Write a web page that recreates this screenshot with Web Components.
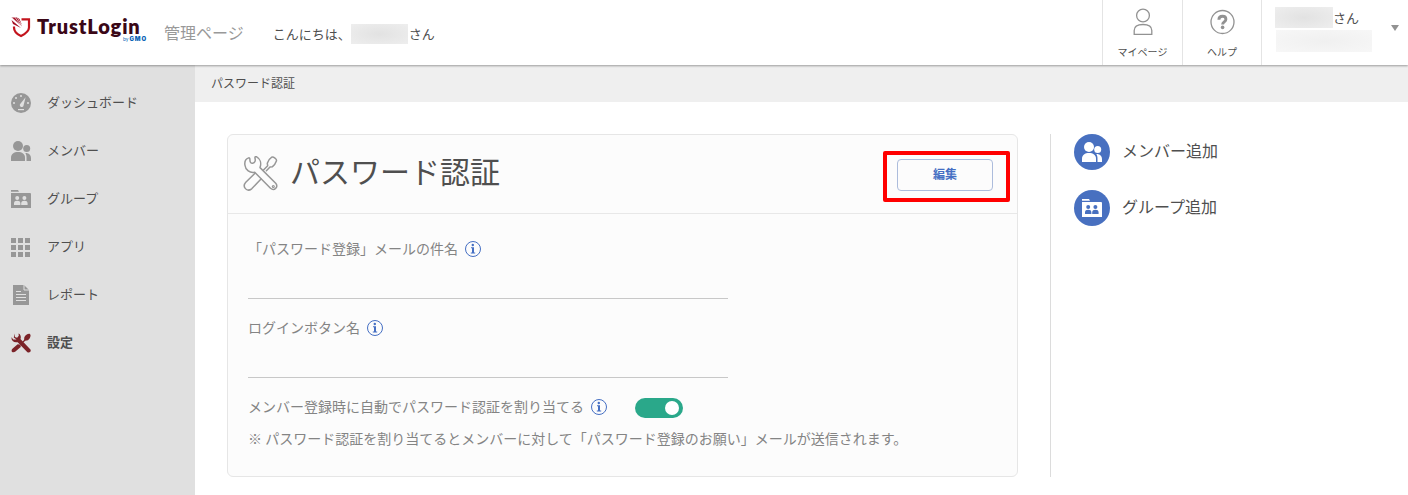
<!DOCTYPE html>
<html lang="ja">
<head>
<meta charset="utf-8">
<title>TrustLogin 管理ページ</title>
<style>
  body {
    margin: 0;
    height: 495px;
    overflow: hidden;
    background: #fff;
    color: #4f4f4f;
    font-family: "Noto Sans CJK JP", sans-serif;
    font-size: 13px;
  }
</style>
</head>
<body>
<trust-app></trust-app>

<script>
function makeTemplate(html) {
  const template = document.createElement("template");
  template.innerHTML = html;
  return template;
}

// base for every element: clones its template into the shadow root
class BaseElement extends HTMLElement {
  constructor() {
    super();
    this.attachShadow({ mode: "open" });
    this.shadowRoot.appendChild(this.constructor.template.content.cloneNode(true));
  }
}

// ICONS
const ICONS = {
  gauge: `<svg viewBox="0 0 20 20"><circle cx="10" cy="10" r="10" fill="currentColor"/>
    <g class="cut"><circle cx="3" cy="10" r="1"/><circle cx="5" cy="5" r="1"/><circle cx="10" cy="3" r="1"/><circle cx="17" cy="10" r="1"/>
    <path d="M14.6 4.2 12.6 12.2A1.9 1.9 0 1 1 9.4 10.8Z"/><rect x="7" y="16" width="6" height="1.2"/></g></svg>`,
  members: `<svg viewBox="0 0 20 20" fill="currentColor"><circle cx="7" cy="5" r="5"/>
    <path d="M0 20v-3.500C0 13 3 11 7 11s7 2 7 5.500V20z"/>
    <circle cx="15.700" cy="7.500" r="3.500"/>
    <path d="M14.300 12c3.500-.2 5.700 2 5.700 5.200V20h-4.500v-3.500c0-1.800-.4-3.200-1.200-4.500z"/></svg>`,
  folder: `<svg viewBox="0 0 20 20"><path fill="currentColor" d="M0 1h7l1 1.700H0zM0 4h19q1 0 1 1v14H0z"/>
    <g class="cut"><circle cx="6.200" cy="9" r="2"/><circle cx="13.400" cy="9" r="2"/>
    <path d="M3 16v-1.800c0-1.700 1.200-2.500 3.200-2.500s3.200.8 3.200 2.500V16zM10.200 16v-1.800c0-1.700 1.200-2.500 3.200-2.500s3.200.8 3.200 2.500V16z"/></g></svg>`,
  apps: `<svg viewBox="0 0 20 20" fill="currentColor"><path d="M0 1h5v5H0zM7 1h5v5H7zM14 1h5v5h-5zM0 8h5v5H0zM7 8h5v5H7zM14 8h5v5h-5zM0 15h5v5H0zM7 15h5v5H7zM14 15h5v5h-5z"/></svg>`,
  report: `<svg viewBox="0 0 20 20"><path fill="currentColor" d="M2 0h11l5 5v15H2z"/>
    <g fill="none" class="cutline"><path d="M13 0v5h5M5 6.500h5M5 9.500h10M5 12.500h10M5 15.500h10"/></g></svg>`,
  tools: `<svg viewBox="0 0 36 36">
    <path fill="currentColor" d="M33.500 1.500C30 1 26 3.500 24 7.500l-.5 5-9 9 1-1-3.500-.2L3 28c-5 5 .7 9 5 5.500L17.500 25v-3l8-8 5-1c3-2 5.500-7 4.500-10z"/>
    <path class="cutline" stroke-width="7" fill="none" d="m13 13 20 20"/>
    <path fill="currentColor" d="M6.500 1 7 7l4 1.500L14 5l-.5-4c4 1.500 5 6 3.500 10l18 18.500c2 4-2 7-5.500 5L12 16.500C5 18 0 14 1 7.500l3 4h6L5 8z"/></svg>`,
  toolsOutline: `<svg viewBox="0 0 36 36" fill="none" stroke="currentColor" stroke-width="1.500" stroke-linejoin="round" stroke-linecap="round">
    <path d="m20.500 14 4.200-4.200-.4-2.500c.6-2.300 2.200-4.800 4.200-6 2-.8 5.600 1.800 4.900 3.600-.8 2.200-2.200 4.400-3.900 5.800l-2.500.4-3.600 3.700M12 17.300l-9.200 9c-4 4.500 1 10.200 5.900 6.500L18 23"/>
    <path d="M5.600 1.900C3 2.800 1.500 5.800 1.900 9c.5 5 5 8.200 9.800 7.200l15.800 16c3.700 3.200 8.200-1.200 5.200-4.900L17 11.600c1.600-4.400.2-8.800-3.300-10.800-1.300-.5-2 .3-1.700 1.400.7 2.600-.1 4.700-2.300 5-2 .2-2.900-1.200-2.800-3.800 0-1-.4-1.700-1.300-1.500z"/>
    <circle cx="30.300" cy="30.500" r="1" stroke-width="1.200"/></svg>`,
  user: `<svg viewBox="0 0 26 28" fill="none" stroke="currentColor" stroke-width="1.300"><circle cx="13" cy="7.500" r="6.400"/>
    <path d="M4.200 26.300v-3.800c0-4 3.200-6 8.800-6s8.800 2 8.800 6v3.800z"/></svg>`,
  help: `<svg viewBox="0 0 26 28" fill="none" stroke="currentColor"><circle cx="13.500" cy="14" r="11.500" stroke-width="1.300"/>
    <path stroke-width="2.900" d="M9.900 11.800c0-2.200 1.400-3.500 3.600-3.500 2.100 0 3.400 1.200 3.400 2.900 0 2.700-3.300 2.500-3.300 5.300"/>
    <circle cx="13.600" cy="19.400" r="1.800" fill="currentColor" stroke="none"/></svg>`,
  info: `<svg viewBox="0 0 16 16"><circle cx="8" cy="8" r="7.500" fill="none" stroke="currentColor"/>
    <circle cx="7.800" cy="4" r="1.200" fill="currentColor"/>
    <path fill="currentColor" d="M6 6.300h3v5.200h1.200v1H5.800v-1H7V7.300H6z"/></svg>`
};

class AppIcon extends BaseElement {
  static observedAttributes = ["name"];
  static template = makeTemplate(`
    <style>
      :host { display: block; flex: none; width: 20px; height: 20px; }
      div, svg { display: block; width: 100%; height: 100%; }
      .cut { fill: var(--cut, #e0e0e0); }
      .cutline { stroke: var(--cut, #e0e0e0); }
    </style>
    <div></div>
  `);
  attributeChangedCallback(attr, old, name) {
    this.shadowRoot.querySelector("div").innerHTML = ICONS[name] || "";
  }
}
customElements.define("app-icon", AppIcon);

// HEADER
class BrandLogo extends BaseElement {
  static template = makeTemplate(`
    <style>
      :host { display: flex; align-items: flex-start; width: 136px; height: 28px; }
      svg { flex: none; width: 20px; height: 21px; margin-top: 2px; }
      .words { margin-left: 6px; font-family: Lato, sans-serif; }
      .name { height: 21px; color: #3a0717; font-size: 20px; font-weight: 800; line-height: 23px; letter-spacing: .85px; white-space: nowrap; }
      .by { display: flex; justify-content: flex-end; align-items: baseline; gap: 1px; width: 110px; color: #0b63b5; line-height: 5px; }
      .by small { font-size: 5px; }
      .by b { font: 900 6px/5px Inter, sans-serif; letter-spacing: .9px; }
    </style>
    <svg viewBox="0 0 20 21">
      <path fill="none" stroke="#c3141d" stroke-width="2.200" d="M10.500 2.300H18v8.200c0 3.500-3 6-8 8.500-4.500-2-7-4.500-7-8.500V9.500"/>
      <path fill="#a40d22" d="M.5.500h5.500L11 9.500zM.5 3 10 11 2 7zM6.500.5l2 1.500L11 8z"/>
      <path stroke="#fff" stroke-width=".7" d="m1 .8 9.500 9M4 .3l6.500 9"/>
    </svg>
    <div class="words">
      <div class="name">TrustLogin</div>
      <div class="by"><small>by</small><b>GMO</b></div>
    </div>
  `);
}
customElements.define("brand-logo", BrandLogo);

class HeaderAction extends BaseElement {
  static template = makeTemplate(`
    <style>
      :host {
        display: flex; flex-direction: column; align-items: center;
        box-sizing: border-box; width: 80px; height: 65px; padding-top: 8px;
        border-left: 1px solid #e4e4e4; font-size: 10px; line-height: 14px;
      }
      ::slotted(app-icon) { width: 26px; height: 28px; margin-bottom: 9px; color: #929292; }
    </style>
    <slot name="icon"></slot>
    <slot></slot>
  `);
}
customElements.define("header-action", HeaderAction);

// hidden name or address
class MaskedText extends BaseElement {
  static template = makeTemplate(`
    <style>
      :host { display: block; background: radial-gradient(ellipse, #e2e2e2, #eee); }
      :host([light]) { background: radial-gradient(ellipse, #f0f0f0, #f7f7f7); }
    </style>
  `);
}
customElements.define("masked-text", MaskedText);

class AppHeader extends BaseElement {
  static template = makeTemplate(`
    <style>
      :host {
        display: flex; height: 65px; box-sizing: border-box; background: #fff;
        box-shadow: 0 1px 2px rgba(0, 0, 0, .35); position: relative; z-index: 1;
      }
      brand-logo { margin: 15px 0 0 11px; }
      .page { margin: 20px 0 0 17px; font-size: 16px; line-height: 24px; color: #999; }
      .hello { display: flex; align-items: center; height: 20px; margin: 24px auto 0 29px; }
      .hello span { margin-top: -2px; }
      .hello masked-text { width: 57px; height: 20px; margin: 0 1px 0 0; }
      .account { display: flex; width: 146px; border-left: 1px solid #e4e4e4; }
      .who { width: 97px; margin: 7px 0 0 13px; }
      .name { display: flex; line-height: 21px; }
      .name masked-text { width: 58px; height: 21px; }
      .who > masked-text { width: 96px; height: 22px; margin: 2px 0 0 1px; }
      .arrow { width: 0; height: 0; margin: 25px 0 0 19px; border: 4px solid transparent; border-top: 6px solid #929292; border-bottom: 0; }
    </style>
    <brand-logo></brand-logo>
    <div class="page">管理ページ</div>
    <div class="hello"><span>こんにちは、</span><masked-text></masked-text><span>さん</span></div>
    <header-action><app-icon slot="icon" name="user"></app-icon>マイページ</header-action>
    <header-action style="width:79px"><app-icon slot="icon" name="help"></app-icon>ヘルプ</header-action>
    <div class="account">
      <div class="who">
        <div class="name"><masked-text></masked-text>さん</div>
        <masked-text light></masked-text>
      </div>
      <div class="arrow"></div>
    </div>
  `);
}
customElements.define("app-header", AppHeader);

// SIDE MENU
class NavItem extends BaseElement {
  static template = makeTemplate(`
    <style>
      :host { display: flex; align-items: center; gap: 16px; height: 48px; padding-left: 11px; }
      app-icon { color: #979797; }
      span { margin-top: -3px; }
      :host([active]) { font-weight: bold; }
      :host([active]) app-icon { color: #7b2328; }
    </style>
    <app-icon></app-icon>
    <span><slot></slot></span>
  `);
  connectedCallback() {
    this.shadowRoot.querySelector("app-icon").setAttribute("name", this.getAttribute("icon"));
  }
}
customElements.define("nav-item", NavItem);

class SideNav extends BaseElement {
  static template = makeTemplate(`
    <style>
      :host { display: block; flex: none; box-sizing: border-box; width: 195px; padding-top: 14px; background: #e0e0e0; }
    </style>
    <slot></slot>
  `);
}
customElements.define("side-nav", SideNav);

// MAIN CARD
class InfoLabel extends BaseElement {
  static template = makeTemplate(`
    <style>
      :host { display: flex; align-items: center; height: 20px; font-size: 14px; line-height: 20px; color: #848484; white-space: nowrap; }
      app-icon { width: 16px; height: 16px; margin-left: 7px; color: #456fc3; }
      span { margin-top: -2px; }
    </style>
    <span><slot></slot></span><app-icon name="info"></app-icon>
  `);
}
customElements.define("info-label", InfoLabel);

class TextField extends BaseElement {
  static template = makeTemplate(`
    <style>
      :host { display: block; box-sizing: border-box; width: 480px; height: 60px; border-bottom: 1px solid #c8c8c8; }
    </style>
    <info-label><slot></slot></info-label>
  `);
}
customElements.define("text-field", TextField);

class ToggleSwitch extends BaseElement {
  static template = makeTemplate(`
    <style>
      :host { display: flex; align-items: center; justify-content: flex-end; box-sizing: border-box; width: 48px; height: 20px; padding-right: 4px; border-radius: 10px; background: #2aa88a; }
      i { width: 14px; height: 14px; border-radius: 50%; background: #fff; }
    </style>
    <i></i>
  `);
  connectedCallback() {
    this.setAttribute("role", "switch");
    this.setAttribute("aria-checked", "true");
  }
}
customElements.define("toggle-switch", ToggleSwitch);

class EditButton extends BaseElement {
  static template = makeTemplate(`
    <style>
      :host { display: block; position: relative; width: 96px; height: 32px; }
      button { display: block; width: 96px; height: 32px; padding: 0 0 3px; border: 1px solid #acbcdc; border-radius: 4px; background: #fcfcfc; color: #456fc3; font: bold 12px "Noto Sans CJK JP", sans-serif; }
      /* red frame drawn round the button */
      .mark { position: absolute; top: -8px; left: -14px; width: 119px; height: 43px; border: 4px solid #f00; border-radius: 2px; }
    </style>
    <button><slot></slot></button>
    <div class="mark"></div>
  `);
}
customElements.define("edit-button", EditButton);

class SettingsCard extends BaseElement {
  static template = makeTemplate(`
    <style>
      :host { display: block; box-sizing: border-box; width: 791px; height: 343px; border: 1px solid #e6e6e6; border-radius: 6px; background: #fcfcfc; }
      header { display: flex; align-items: center; height: 78px; padding: 0 24px 0 15px; border-bottom: 1px solid #e8e8e8; }
      header app-icon { width: 36px; height: 36px; color: #979797; }
      h1 { flex: 1; margin: 0 0 8px 11px; font-size: 30px; font-weight: normal; line-height: 44px; }
      edit-button { margin-top: 2px; }
      .body { padding: 25px 20px 0; }
    </style>
    <header>
      <app-icon name="toolsOutline"></app-icon>
      <h1><slot name="title"></slot></h1>
      <edit-button>編集</edit-button>
    </header>
    <div class="body"><slot></slot></div>
  `);
}
customElements.define("settings-card", SettingsCard);

// RIGHT COLUMN
class QuickAction extends BaseElement {
  static template = makeTemplate(`
    <style>
      :host { display: flex; align-items: center; gap: 12px; height: 36px; font-size: 16px; line-height: 34px; }
      .circle { display: grid; place-items: center; width: 36px; height: 36px; border-radius: 50%; background: #4870c0; color: #fff; --cut: #4870c0; }
      span { margin-top: -4px; }
    </style>
    <div class="circle"><slot name="icon"></slot></div>
    <span><slot></slot></span>
  `);
}
customElements.define("quick-action", QuickAction);

class TrustApp extends BaseElement {
  static template = makeTemplate(`
    <style>
      :host { display: flex; flex-direction: column; height: 495px; }
      .below { display: flex; flex: 1; }
      main { flex: 1; }
      .crumb { box-sizing: border-box; height: 37px; padding-left: 16px; background: #efefef; font-size: 12px; line-height: 35px; }
      .content { display: flex; padding: 32px; }
      aside { display: flex; flex-direction: column; gap: 20px; margin-left: 32px; padding-left: 23px; border-left: 1px solid #dcdcdc; }
      text-field { margin-bottom: 19px; }
      .assign { display: flex; gap: 28px; }
      toggle-switch { margin-top: 1px; }
      p { margin: 10px 0 0; font-size: 14px; line-height: 20px; color: #848484; }
    </style>
    <app-header></app-header>
    <div class="below">
      <side-nav>
        <nav-item icon="gauge">ダッシュボード</nav-item>
        <nav-item icon="members">メンバー</nav-item>
        <nav-item icon="folder">グループ</nav-item>
        <nav-item icon="apps">アプリ</nav-item>
        <nav-item icon="report">レポート</nav-item>
        <nav-item icon="tools" active>設定</nav-item>
      </side-nav>
      <main>
        <div class="crumb">パスワード認証</div>
        <div class="content">
          <settings-card>
            <span slot="title">パスワード認証</span>
            <text-field>「パスワード登録」メールの件名</text-field>
            <text-field>ログインボタン名</text-field>
            <div class="assign">
              <info-label>メンバー登録時に自動でパスワード認証を割り当てる</info-label>
              <toggle-switch></toggle-switch>
            </div>
            <p>※ パスワード認証を割り当てるとメンバーに対して「パスワード登録のお願い」メールが送信されます。</p>
          </settings-card>
          <aside>
            <quick-action><app-icon slot="icon" name="members"></app-icon>メンバー追加</quick-action>
            <quick-action><app-icon slot="icon" name="folder"></app-icon>グループ追加</quick-action>
          </aside>
        </div>
      </main>
    </div>
  `);
}
customElements.define("trust-app", TrustApp);
</script>
</body>
</html>
